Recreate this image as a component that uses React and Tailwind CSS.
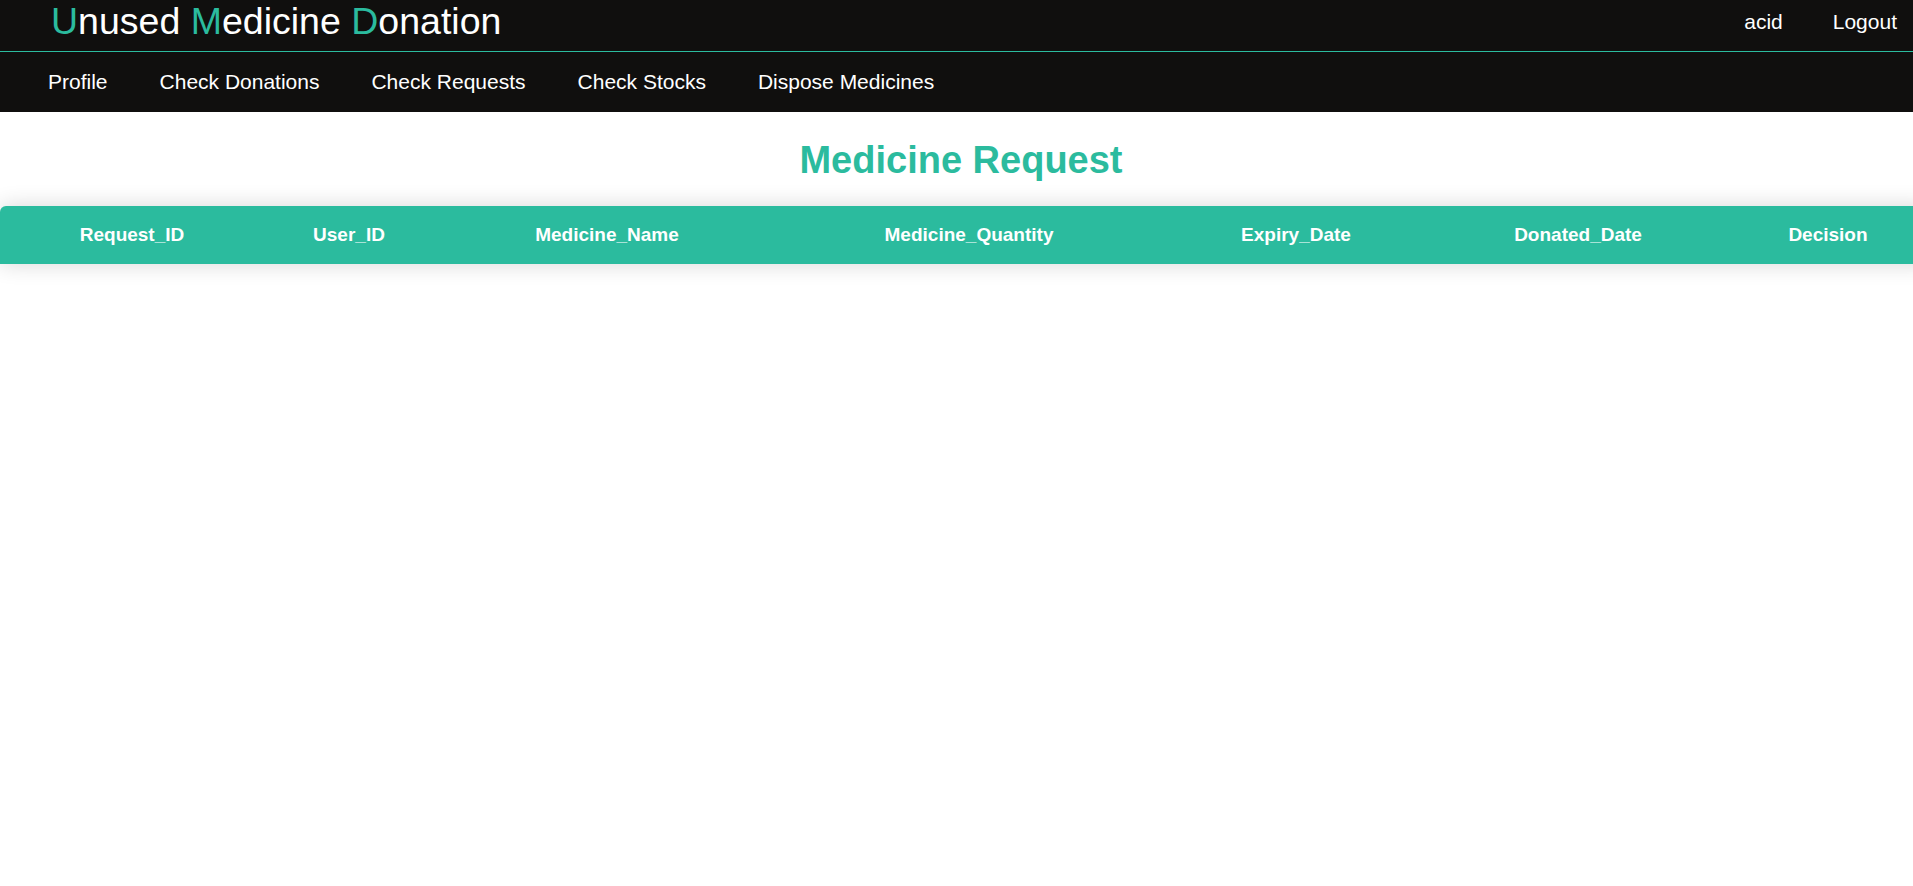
import React from 'react';

const navLinks = ['Profile', 'Check Donations', 'Check Requests', 'Check Stocks', 'Dispose Medicines'];

// header columns, widths picked to line up with the original table
const columns = [
  { label: 'Request_ID', width: 'w-[264px]' },
  { label: 'User_ID', width: 'w-[170px]' },
  { label: 'Medicine_Name', width: 'w-[346px]' },
  { label: 'Medicine_Quantity', width: 'w-[378px]' },
  { label: 'Expiry_Date', width: 'w-[276px]' },
  { label: 'Donated_Date', width: 'w-[288px]' },
  { label: 'Decision', width: 'w-[212px]' },
];

function TopBar() {
  return (
    <header className="bg-[#100f0e] text-white">
      <div className="h-[51px] flex items-start justify-between">
        <h2 className="pl-[51px] text-[37.5px] leading-[42px] font-normal">
          <span className="text-[#2bbb9e]">U</span>nused{' '}
          <span className="text-[#2bbb9e]">M</span>edicine{' '}
          <span className="text-[#2bbb9e]">D</span>onation
        </h2>
        <div className="flex gap-[50px] pr-[16px] pt-[10px] text-[21px] leading-[24px]">
          <a href="#">acid</a>
          <a href="#">Logout</a>
        </div>
      </div>
      <div className="h-px bg-[#2bbb9e]" />
      <nav className="h-[60px] flex items-center gap-[52px] pl-[48px] text-[21px] leading-[24px]">
        {navLinks.map((link) => (
          <a key={link} href="#" className="whitespace-nowrap">
            {link}
          </a>
        ))}
      </nav>
    </header>
  );
}

function RequestTable() {
  return (
    <div className="w-[1934px] rounded-t-[6px] bg-[#2bbb9e] shadow-[0_0_22px_rgba(0,0,0,0.16)]">
      <div className="h-[58px] flex items-center text-white font-bold text-[19px] leading-[22px]">
        {columns.map((col) => (
          <div key={col.label} className={`${col.width} shrink-0 text-center whitespace-nowrap`}>
            {col.label}
          </div>
        ))}
      </div>
    </div>
  );
}

export default function App() {
  return (
    <div className="min-h-[886px] bg-white overflow-x-hidden font-['Liberation_Sans',Arial,sans-serif]">
      <TopBar />
      <main>
        <h1 className="mt-[27px] pl-[9px] text-center text-[38px] leading-[43px] font-bold text-[#2bbb9e]">
          Medicine Request
        </h1>
        <div className="mt-[24px]">
          <RequestTable />
        </div>
      </main>
    </div>
  );
}
